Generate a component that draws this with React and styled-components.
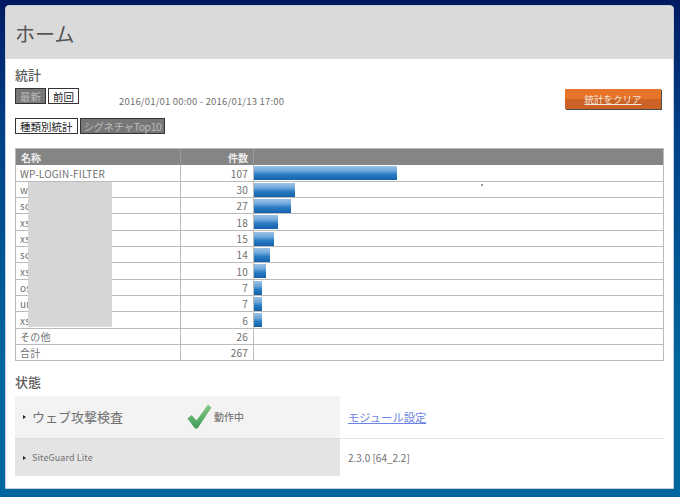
import React from 'react'
import styled, { createGlobalStyle } from 'styled-components'

const GlobalStyle = createGlobalStyle`
  html, body {
    margin: 0;
    padding: 0;
  }
  body {
    width: 680px;
    height: 497px;
    overflow: hidden;
    font-family: "Noto Sans CJK JP", "Liberation Sans", sans-serif;
    color: #555;
  }
`

const Page = styled.div`
  box-sizing: border-box;
  width: 680px;
  height: 497px;
  padding: 5px 6px 8px 5px;
  background: linear-gradient(180deg, #001a62 0%, #003f86 25%, #00679f 75%, #00669f 100%);
`

const Panel = styled.div`
  box-sizing: border-box;
  height: 484px;
  background: #fff;
  border: 1px solid #c9ced6;
  border-top-right-radius: 4px;
  border-top-left-radius: 4px;
  overflow: hidden;
`

const Header = styled.header`
  height: 53px;
  padding: 0 0 0 9px;
  background: #dadada;
  display: flex;
  align-items: center;
`

const Title = styled.h1`
  margin: 2px 0 0;
  font-size: 20px;
  font-weight: 400;
  color: #555;
`

const Body = styled.div`
  padding: 0 9px;
`

const SectionTitle = styled.h2`
  margin: 0;
  height: 18px;
  font-size: 13px;
  line-height: 18px;
  font-weight: 500;
  color: #5c5c5c;
`

const StatsTitle = styled(SectionTitle)`
  margin-top: 7px;
`

const PeriodRow = styled.div`
  display: flex;
  height: 30px;
  margin-top: 4px;
`

const Chip = styled.span`
  box-sizing: border-box;
  display: inline-flex;
  align-items: center;
  justify-content: center;
  height: 16px;
  padding: 0 ${(p) => (p.$tight ? '3px' : '4px')};
  font-size: 10.5px;
  letter-spacing: ${(p) => (p.$tight ? '-0.45px' : '0')};
  border: 1px solid #333;
  background: ${(p) => (p.$active ? '#777' : '#fff')};
  color: ${(p) => (p.$active ? '#bbb' : '#222')};
`

const ChipGroup = styled.div`
  display: flex;
  gap: 2px;
`

const DateRange = styled.span`
  margin: 7px 0 0 40px;
  font-size: 9.5px;
  line-height: 12px;
  letter-spacing: 0.19px;
  color: #707070;
`

const ClearButton = styled.button`
  box-sizing: border-box;
  width: 96px;
  height: 20px;
  margin: 1px 3px 0 auto;
  padding: 0;
  border: 0;
  font: inherit;
  font-size: 9.5px;
  color: #f3e5da;
  text-decoration: underline;
  background: linear-gradient(180deg, #e8742a 0 50%, #cb6226 50% 100%);
  box-shadow: 1px 1px 0 #4a4a4a;
`

const StatsTable = styled.div`
  position: relative;
  display: grid;
  grid-template-columns: 165px 73px 1fr;
  grid-auto-rows: 16.35px;
  margin-top: 14px;
  width: 649px;
  border: solid #bbb;
  border-width: 1px 1px 0 1px;
  box-sizing: border-box;
`

const HeadCell = styled.div`
  box-sizing: border-box;
  display: flex;
  align-items: center;
  justify-content: ${(p) => (p.$right ? 'flex-end' : 'flex-start')};
  padding: 0 5px;
  font-size: 10px;
  font-weight: 700;
  color: #eee;
  background: #858585;
  border-right: ${(p) => (p.$last ? 0 : '1px solid #999')};
`

const Cell = styled.div`
  box-sizing: border-box;
  display: flex;
  align-items: center;
  justify-content: ${(p) => (p.$right ? 'flex-end' : 'flex-start')};
  padding: 0 5px 0 4px;
  font-size: 10px;
  letter-spacing: 0.2px;
  color: #707070;
  background: #fff;
  border-bottom: 1px solid #bbb;
  border-right: ${(p) => (p.$last ? 0 : '1px solid #bbb')};
`

const BarCell = styled(Cell)`
  padding: 0;
  align-items: flex-start;
`

const Bar = styled.div`
  height: 14px;
  margin-top: 1px;
  background: linear-gradient(180deg, #9cc4e6 0%, #6ea7db 35%, #2a7cc4 60%, #1560ac 100%);
`

const Redaction = styled.div`
  position: absolute;
  left: 12px;
  top: 33px;
  width: 84px;
  height: 145px;
  background: #d6d6d6;
`

const Speck = styled.i`
  position: absolute;
  left: 465px;
  top: 35px;
  width: 2px;
  height: 2px;
  background: #999;
`

const StatusTitle = styled(SectionTitle)`
  margin-top: 12px;
`

const StatusTable = styled.div`
  display: grid;
  grid-template-columns: 325px 1fr;
  grid-template-rows: 42px 38px;
  margin-top: 5px;
  width: 649px;
`

const NameCell = styled.div`
  display: flex;
  align-items: center;
  padding-left: 8px;
  background: ${(p) => (p.$dark ? '#e4e4e4' : '#f3f3f3')};
  border-top: ${(p) => (p.$dark ? '1px solid #ddd' : 0)};
`

const Arrow = styled.span`
  width: 0;
  height: 0;
  margin-right: 6px;
  border-left: 3px solid #222;
  border-top: 2.5px solid transparent;
  border-bottom: 2.5px solid transparent;
`

const ModuleName = styled.span`
  width: 155px;
  margin-bottom: 2px;
  font-size: 13px;
  color: #707070;
`

const SmallName = styled.span`
  font-size: 9px;
  letter-spacing: 0.1px;
  color: #707070;
`

const Running = styled.span`
  display: flex;
  align-items: center;
  gap: 2px;
  margin-bottom: 1px;
  font-size: 10px;
  color: #666;
`

const ValueCell = styled.div`
  display: flex;
  align-items: center;
  padding-left: 8px;
  font-size: 10px;
  color: #707070;
  border-top: ${(p) => (p.$line ? '1px solid #e5e5e5' : 0)};
`

const ModuleLink = styled.a`
  font-size: 11.3px;
  color: #6b84e4;
  text-decoration: underline;
`

const rows = [
  ['WP-LOGIN-FILTER', 107, 143],
  ['wo', 30, 41],
  ['sc', 27, 37],
  ['xs', 18, 24],
  ['xs', 15, 20],
  ['sc', 14, 16],
  ['xs', 10, 12],
  ['os', 7, 8],
  ['ur', 7, 8],
  ['xs', 6, 8],
  ['その他', 26, 0],
  ['合計', 267, 0],
]

const CheckIcon = () => (
  <svg width="25" height="25" viewBox="0 0 25 25">
    <defs>
      <linearGradient id="check" x1="0" y1="0" x2="0" y2="1">
        <stop offset="0" stopColor="#86c98a" />
        <stop offset="1" stopColor="#3f9c56" />
      </linearGradient>
    </defs>
    <path d="M0.5 14.5 L4.5 11 L9.5 16.5 L21 0.5 L24.5 3.5 L10.5 24.5 L8 24.5 Z" fill="url(#check)" />
  </svg>
)

const App = () => (
  <Page>
    <GlobalStyle />
    <Panel>
      <Header>
        <Title>ホーム</Title>
      </Header>
      <Body>
        <StatsTitle>統計</StatsTitle>
        <PeriodRow>
          <ChipGroup>
            <Chip $active>最新</Chip>
            <Chip>前回</Chip>
          </ChipGroup>
          <DateRange>2016/01/01 00:00 - 2016/01/13 17:00</DateRange>
          <ClearButton>統計をクリア</ClearButton>
        </PeriodRow>
        <ChipGroup>
          <Chip>種類別統計</Chip>
          <Chip $active $tight>シグネチャTop10</Chip>
        </ChipGroup>
        <StatsTable>
          <HeadCell>名称</HeadCell>
          <HeadCell $right>件数</HeadCell>
          <HeadCell $last />
          {rows.map(([name, count, width], i) => (
            <React.Fragment key={i}>
              <Cell>{name}</Cell>
              <Cell $right>{count}</Cell>
              <BarCell $last>
                {width > 0 && <Bar style={{ width }} />}
              </BarCell>
            </React.Fragment>
          ))}
          <Redaction />
          <Speck />
        </StatsTable>
        <StatusTitle>状態</StatusTitle>
        <StatusTable>
          <NameCell>
            <Arrow />
            <ModuleName>ウェブ攻撃検査</ModuleName>
            <Running>
              <CheckIcon />
              動作中
            </Running>
          </NameCell>
          <ValueCell>
            <ModuleLink href="#">モジュール設定</ModuleLink>
          </ValueCell>
          <NameCell $dark>
            <Arrow />
            <SmallName>SiteGuard Lite</SmallName>
          </NameCell>
          <ValueCell $line>2.3.0 [64_2.2]</ValueCell>
        </StatusTable>
      </Body>
    </Panel>
  </Page>
)

export default App
